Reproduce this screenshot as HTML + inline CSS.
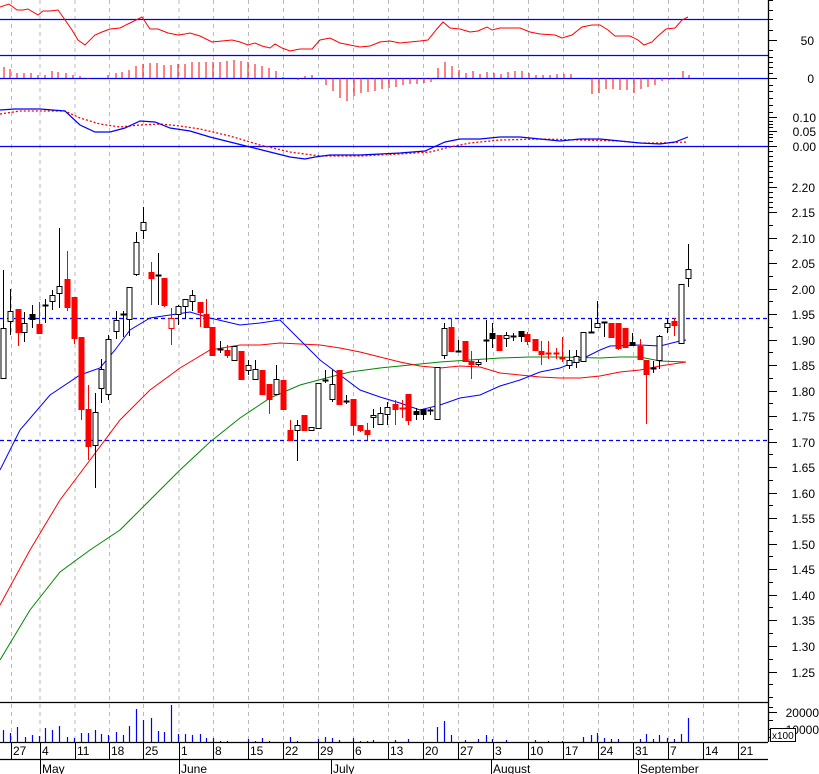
<!DOCTYPE html>
<html><head><meta charset="utf-8"><style>
html,body{margin:0;padding:0;background:#fff}
svg{display:block}
text{font-family:"Liberation Sans",sans-serif;font-size:12px;fill:#000}
.w{fill:#fff;stroke:#000;stroke-width:1}
.r{fill:#f00;stroke:#f00;stroke-width:1}
.rw{fill:#fff;stroke:#f00;stroke-width:1}
.k{fill:#000;stroke:#000;stroke-width:1}
.g{stroke:#bbb;stroke-dasharray:4,4;stroke-width:1}
</style></head><body>
<svg width="819" height="774" viewBox="0 0 819 774" xmlns="http://www.w3.org/2000/svg">
<rect width="819" height="774" fill="#fff"/>
<g id="grid"></g>
<g class="g">
<line x1="11.5" y1="0" x2="11.5" y2="742"/><line x1="40" y1="0" x2="40" y2="742"/><line x1="75" y1="0" x2="75" y2="742"/><line x1="109.5" y1="0" x2="109.5" y2="742"/><line x1="143.5" y1="0" x2="143.5" y2="742"/><line x1="179" y1="0" x2="179" y2="742"/><line x1="213.5" y1="0" x2="213.5" y2="742"/><line x1="248.5" y1="0" x2="248.5" y2="742"/><line x1="283.5" y1="0" x2="283.5" y2="742"/><line x1="318.5" y1="0" x2="318.5" y2="742"/><line x1="353.5" y1="0" x2="353.5" y2="742"/><line x1="388.5" y1="0" x2="388.5" y2="742"/><line x1="423.5" y1="0" x2="423.5" y2="742"/><line x1="458.5" y1="0" x2="458.5" y2="742"/><line x1="493.5" y1="0" x2="493.5" y2="742"/><line x1="528.5" y1="0" x2="528.5" y2="742"/><line x1="563.5" y1="0" x2="563.5" y2="742"/><line x1="598.5" y1="0" x2="598.5" y2="742"/><line x1="633.5" y1="0" x2="633.5" y2="742"/><line x1="668.5" y1="0" x2="668.5" y2="742"/><line x1="703.5" y1="0" x2="703.5" y2="742"/><line x1="738.5" y1="0" x2="738.5" y2="742"/>
</g>
<!-- panel lines -->
<g stroke="#00f" stroke-width="1.3">
<line x1="0" y1="19.5" x2="768" y2="19.5"/><line x1="0" y1="55.5" x2="768" y2="55.5"/><line x1="0" y1="78.5" x2="768" y2="78.5"/><line x1="0" y1="146.5" x2="768" y2="146.5"/>
</g>
<g stroke="#000" stroke-width="1.3">
<line x1="0" y1="702.5" x2="768" y2="702.5"/><line x1="0" y1="742.5" x2="768" y2="742.5"/><line x1="0" y1="759.5" x2="768" y2="759.5"/>
<line x1="768.5" y1="0" x2="768.5" y2="742"/>
</g>
<!-- RSI -->
<polyline fill="none" stroke="#f00" stroke-width="1" points="0,7 9,4 17,10 23,10 28,9 38,15 43,11 50,11 58,10 63,17 72,30 78,40 85,45 95,35 102,32 110,29 120,28 128,24 136,20 142,17 150,29 158,29 168,33 178,35 185,34 190,33 200,36 212,42 222,41 232,40 240,42 248,45 255,43 262,46 270,48 275,44 282,48 290,51 300,49 312,49 320,40 330,38 340,43 350,45 360,47 370,46 380,42 390,41 400,43 410,42 420,41 428,40 436,30 443,22 450,28 460,29 470,32 478,31 487,27 492,30 500,28 520,28 530,32 540,34 555,35 562,38 572,35 582,27 592,25 600,25 608,30 615,36 630,36 638,40 644,45 652,42 658,36 666,29 675,28 682,20 688,17"/>
<!-- histogram -->
<g stroke="#f00" stroke-width="1">
<path d="M4 78V67M10 78V69M17 78V73M24 78V73M31 78V73M38 78V75M45 78V75M52 78V71M58 78V72M66 78V73M73 78V75M80 78V76M88 78V79M108 78V75M116 78V73M122 78V72M129 78V70M136 78V66M143 78V64M150 78V63M157 78V63M164 78V65M171 78V65M178 78V64M185 78V64M192 78V62M199 78V62M206 78V62M213 78V62M220 78V62M227 78V61M234 78V60M241 78V61M248 78V62M255 78V64M262 78V66M269 78V68M276 78V71M283 78V77M298 78V80M305 78V76M312 78V75M326 78V85M333 78V91M340 78V98M347 78V101M354 78V96M361 78V93M368 78V92M375 78V91M382 78V89M389 78V88M396 78V87M403 78V85M410 78V84M417 78V84M424 78V83M431 78V82M438 78V68M445 78V62M452 78V66M459 78V70M466 78V73M473 78V71M480 78V74M487 78V72M494 78V73M501 78V74M508 78V72M515 78V71M522 78V71M529 78V73M536 78V75M543 78V75M550 78V75M557 78V74M564 78V74M571 78V74M592 78V94M599 78V93M606 78V89M613 78V89M620 78V90M627 78V90M634 78V93M641 78V89M648 78V87M655 78V85M662 78V81M669 78V80M676 78V79M683 78V71M689 78V75"/>
</g>
<!-- MACD -->
<polyline fill="none" stroke="#f00" stroke-width="1.3" stroke-dasharray="2,2" points="0,114 20,111 65,111 80,118 100,124 120,127 140,125 160,124 180,126 200,129 230,136 260,145 290,152 320,156 360,156 400,154 430,152 450,147 470,143 500,140 540,139 580,140 620,141 640,143 660,143 688,142"/>
<polyline fill="none" stroke="#00f" stroke-width="1.2" points="0,110 15,109 40,109 65,111 80,125 95,132 110,132 125,128 140,121 155,122 170,128 190,131 210,137 230,142 250,147 270,152 290,157 305,159 315,157 330,155 360,155 380,154 400,153 425,151 445,142 460,139 480,139 490,138 500,137 520,137 540,139 560,141 580,139 600,139 620,141 640,143 660,144 675,142 688,137"/>
<!-- price dashed lines -->
<g stroke="#00f" stroke-width="1.3" stroke-dasharray="4,3">
<line x1="0" y1="318.5" x2="768" y2="318.5"/><line x1="0" y1="440.5" x2="768" y2="440.5"/>
</g>
<!-- MAs -->
<polyline fill="none" stroke="#080" stroke-width="1" points="0,660 30,610 60,572 90,550 120,530 150,500 180,470 210,442 240,418 270,398 300,385 330,377 350,372 380,368 410,365 440,362 470,360 500,358 530,357 560,357 600,358 620,357 640,357 660,361 686,362"/>
<polyline fill="none" stroke="#f00" stroke-width="1" points="0,605 30,550 60,500 90,460 120,420 150,390 180,368 210,350 240,345 260,345 280,343 300,344 320,345 340,348 360,352 380,357 400,362 420,366 440,368 460,366 480,367 500,373 520,375 540,377 560,378 580,378 600,376 620,372 640,370 660,366 686,362"/>
<polyline fill="none" stroke="#00f" stroke-width="1" points="0,470 20,430 50,395 80,375 100,368 115,350 130,330 150,318 170,315 190,312 210,318 240,325 260,323 280,320 300,340 320,360 340,375 360,390 380,397 400,403 420,410 440,405 460,398 480,395 500,386 520,380 540,372 560,368 580,360 600,350 610,346 640,345 660,346 680,341 686,340"/>
<!-- candles -->
<g id="c"></g>
<g stroke-width="1">
<path stroke="#000" d="M3.5 270V379M10.5 289V335M24.5 312V342M32.5 305V328M45.5 299V323M52.5 290V310M59.5 228V308M95.5 393V488M101.5 359V403M108.5 335V400M116.5 311V339M123.5 311V337M129.5 287V336M136.5 232V276M143.5 207V239M158.5 253V305M178.5 305V325M185.5 299V319M192.5 290V311M220.5 341V353M234.5 346V360M248.5 360V375M255.5 360V379M276.5 365V394M297.5 420V461M311.5 427V430M318.5 383V428M325.5 370V383M332.5 370V402M346.5 395V404M373.5 409V428M380.5 407V424M387.5 402V425M416.5 408V420M423.5 409V420M430.5 408V415M437.5 367V419M444.5 323V359M458.5 340V352M478.5 360V366M486.5 320V362M492.5 323V348M506.5 332V347M513.5 333V341M521.5 331V342M569.5 350V369M576.5 350V368M583.5 332V361M591.5 318V332M597.5 301V328M604.5 322V337M632.5 333V345M653.5 361V373M659.5 335V369M667.5 318V333M681.5 284V343M688.5 244V287"/>
<path stroke="#f00" d="M18.5 309V346M39.5 302V333M67.5 251V311M74.5 297V344M81.5 337V420M88.5 385V460M151.5 262V305M164.5 278V307M171.5 308V345M200.5 302V327M206.5 299V327M212.5 327V355M227.5 345V358M241.5 351V380M262.5 370V394M269.5 384V414M283.5 380V409M290.5 420V440M304.5 415V430M339.5 370V404M353.5 399V435M360.5 425V432M367.5 423V440M395.5 400V425M402.5 400V418M408.5 394V425M451.5 318V352M465.5 341V362M471.5 351V379M499.5 335V350M527.5 332V345M535.5 339V350M541.5 341V365M548.5 341V359M556.5 348V359M562.5 337V362M611.5 323V337M618.5 323V350M625.5 328V347M640.5 339V359M646.5 360V424M674.5 318V336"/>
</g>
<g>
<rect class="w" x="1" y="328.5" width="5" height="50"/>
<rect class="w" x="8" y="311.5" width="5" height="10"/>
<rect class="r" x="16" y="309.5" width="5" height="23"/>
<rect class="w" x="22" y="323.5" width="5" height="9"/>
<rect class="k" x="30" y="314.5" width="5" height="5"/>
<rect class="r" x="37" y="324.5" width="5" height="9"/>
<rect class="k" x="43" y="305" width="5" height="1"/>
<rect class="w" x="50" y="295.5" width="5" height="6"/>
<rect class="w" x="57" y="286.5" width="5" height="7"/>
<rect class="r" x="65" y="279.5" width="5" height="28"/>
<rect class="r" x="72" y="297.5" width="5" height="41"/>
<rect class="r" x="79" y="337.5" width="5" height="72"/>
<rect class="r" x="86" y="409.5" width="5" height="37"/>
<rect class="w" x="93" y="412.5" width="5" height="33"/>
<rect class="w" x="99" y="369.5" width="5" height="19"/>
<rect class="w" x="106" y="339.5" width="5" height="55"/>
<rect class="w" x="114" y="320.5" width="5" height="11"/>
<rect class="k" x="121" y="314" width="5" height="1"/>
<rect class="w" x="127" y="287.5" width="5" height="32"/>
<rect class="w" x="134" y="242.5" width="5" height="32"/>
<rect class="w" x="141" y="222.5" width="5" height="8"/>
<rect class="r" x="149" y="272.5" width="5" height="6"/>
<rect class="k" x="156" y="275" width="5" height="1"/>
<rect class="r" x="162" y="278.5" width="5" height="27"/>
<rect class="rw" x="169" y="318.5" width="5" height="10"/>
<rect class="w" x="176" y="306.5" width="5" height="8"/>
<rect class="w" x="183" y="299.5" width="5" height="7"/>
<rect class="w" x="190" y="295.5" width="5" height="6"/>
<rect class="r" x="198" y="302.5" width="5" height="10"/>
<rect class="r" x="204" y="314.5" width="5" height="13"/>
<rect class="r" x="210" y="327.5" width="5" height="28"/>
<rect class="k" x="218" y="349" width="5" height="1"/>
<rect class="r" x="225" y="350.5" width="5" height="5"/>
<rect class="w" x="232" y="346.5" width="5" height="14"/>
<rect class="r" x="239" y="351.5" width="5" height="28"/>
<rect class="w" x="246" y="365.5" width="5" height="5"/>
<rect class="w" x="253" y="369.5" width="5" height="10"/>
<rect class="r" x="260" y="370.5" width="5" height="24"/>
<rect class="r" x="267" y="384.5" width="5" height="15"/>
<rect class="w" x="274" y="379.5" width="5" height="15"/>
<rect class="r" x="281" y="380.5" width="5" height="29"/>
<rect class="r" x="288" y="430.5" width="5" height="10"/>
<rect class="w" x="295" y="425.5" width="5" height="5"/>
<rect class="r" x="302" y="415.5" width="5" height="15"/>
<rect class="w" x="309" y="427.5" width="5" height="3"/>
<rect class="w" x="316" y="383.5" width="5" height="45"/>
<rect class="k" x="323" y="380" width="5" height="1"/>
<rect class="w" x="330" y="384.5" width="5" height="15"/>
<rect class="r" x="337" y="370.5" width="5" height="34"/>
<rect class="k" x="344" y="401" width="5" height="1"/>
<rect class="r" x="351" y="399.5" width="5" height="26"/>
<rect class="r" x="358" y="425.5" width="5" height="5"/>
<rect class="r" x="365" y="430.5" width="5" height="4"/>
<rect class="w" x="371" y="415.5" width="5" height="2"/>
<rect class="w" x="378" y="413.5" width="5" height="11"/>
<rect class="w" x="385" y="407.5" width="5" height="7"/>
<rect class="r" x="393" y="404.5" width="5" height="5"/>
<rect class="r" x="400" y="408" width="5" height="1"/>
<rect class="r" x="406" y="394.5" width="5" height="26"/>
<rect class="k" x="414" y="411.5" width="5" height="3"/>
<rect class="k" x="421" y="409.5" width="5" height="5"/>
<rect class="k" x="428" y="410" width="5" height="1"/>
<rect class="w" x="435" y="367.5" width="5" height="52"/>
<rect class="w" x="442" y="328.5" width="5" height="27"/>
<rect class="r" x="449" y="327.5" width="5" height="24"/>
<rect class="k" x="456" y="351" width="5" height="1"/>
<rect class="r" x="463" y="341.5" width="5" height="20"/>
<rect class="r" x="469" y="361.5" width="5" height="3"/>
<rect class="w" x="476" y="362.5" width="5" height="2"/>
<rect class="k" x="484" y="340" width="5" height="1"/>
<rect class="k" x="490" y="333.5" width="5" height="5"/>
<rect class="r" x="497" y="335.5" width="5" height="15"/>
<rect class="w" x="504" y="335.5" width="5" height="3"/>
<rect class="k" x="511" y="336" width="5" height="1"/>
<rect class="k" x="519" y="331.5" width="5" height="5"/>
<rect class="r" x="525" y="334.5" width="5" height="7"/>
<rect class="r" x="533" y="339.5" width="5" height="11"/>
<rect class="r" x="539" y="351.5" width="5" height="3"/>
<rect class="r" x="546" y="353" width="5" height="1"/>
<rect class="r" x="554" y="353" width="5" height="1"/>
<rect class="r" x="560" y="358" width="5" height="1"/>
<rect class="w" x="567" y="360.5" width="5" height="5"/>
<rect class="w" x="574" y="356.5" width="5" height="6"/>
<rect class="w" x="581" y="332.5" width="5" height="29"/>
<rect class="k" x="589" y="332" width="5" height="1"/>
<rect class="w" x="595" y="323.5" width="5" height="4"/>
<rect class="k" x="602" y="322" width="5" height="1"/>
<rect class="r" x="609" y="323.5" width="5" height="14"/>
<rect class="r" x="616" y="323.5" width="5" height="25"/>
<rect class="r" x="623" y="328.5" width="5" height="19"/>
<rect class="k" x="630" y="342.5" width="5" height="3"/>
<rect class="r" x="638" y="346.5" width="5" height="13"/>
<rect class="r" x="644" y="360.5" width="5" height="14"/>
<rect class="k" x="651" y="368" width="5" height="1"/>
<rect class="w" x="657" y="336.5" width="5" height="24"/>
<rect class="w" x="665" y="323.5" width="5" height="4"/>
<rect class="r" x="672" y="321.5" width="5" height="4"/>
<rect class="w" x="679" y="284.5" width="5" height="59"/>
<rect class="w" x="686" y="269.5" width="5" height="9"/>
</g>
<!-- volume -->
<path stroke="#00f" stroke-width="1.2" d="M3.5 742V730M10.5 742V733M17.5 742V727M25.5 742V737M32.5 742V735M39.5 742V736M45.5 742V728M52.5 742V730M59.5 742V726M67.5 742V737M74.5 742V738M81.5 742V733M88.5 742V733M95.5 742V730M101.5 742V734M108.5 742V735M116.5 742V732M123.5 742V735M129.5 742V726M136.5 742V709M143.5 742V720M151.5 742V718M158.5 742V731M164.5 742V732M171.5 742V705M178.5 742V734M185.5 742V734M192.5 742V735M200.5 742V734M206.5 742V738M213.5 742V738M220.5 742V741M227.5 742V741M248.5 742V739M255.5 742V741M262.5 742V738M269.5 742V741M290.5 742V737M297.5 742V741M318.5 742V739M325.5 742V737M332.5 742V738M339.5 742V740M353.5 742V738M360.5 742V741M367.5 742V741M373.5 742V740M395.5 742V740M408.5 742V739M437.5 742V727M444.5 742V721M451.5 742V735M465.5 742V740M478.5 742V739M486.5 742V735M492.5 742V739M506.5 742V740M535.5 742V740M548.5 742V741M562.5 742V741M583.5 742V737M591.5 742V735M597.5 742V733M604.5 742V738M611.5 742V739M618.5 742V739M640.5 742V739M646.5 742V734M653.5 742V739M659.5 742V735M667.5 742V738M674.5 742V739M681.5 742V734M688.5 742V718"/>
<!-- right axis ticks -->
<path stroke="#000" stroke-width="1" d="M769 0.5h4M769 10.5h4M769 19.5h4M769 30.5h4M769 40.5h8M769 50.5h4M769 57.5h4M769 62.5h4M769 67.5h4M769 73.5h4M769 78.5h8M769 85.5h4M769 91.5h4M769 98.5h4M769 105.5h4M769 112.5h4M769 117.5h8M769 121.5h4M769 124.5h4M769 127.5h4M769 131.5h8M769 134.5h4M769 137.5h4M769 141.5h4M769 146.5h8M769 151.5h4M769 156.5h4M769 161.5h4M769 166.5h4M769 171.5h4M769 177.5h4M769 182.5h4M769 187.5h8M769 192.5h4M769 197.5h4M769 202.5h4M769 207.5h4M769 212.5h8M769 238.5h8M769 263.5h8M769 289.5h8M769 314.5h8M769 340.5h8M769 365.5h8M769 391.5h8M769 416.5h8M769 442.5h8M769 467.5h8M769 493.5h8M769 518.5h8M769 544.5h8M769 569.5h8M769 595.5h8M769 620.5h8M769 646.5h8M769 672.5h8M769 697.5h4M769 707.5h4M769 712.5h8M769 720.5h4M769 729.5h8M769 737.5h4"/>
<path stroke="#000" stroke-width="1" d="M769 225.5h4M769 250.5h4M769 276.5h4M769 301.5h4M769 327.5h4M769 352.5h4M769 378.5h4M769 403.5h4M769 429.5h4M769 454.5h4M769 480.5h4M769 505.5h4M769 531.5h4M769 556.5h4M769 582.5h4M769 607.5h4M769 633.5h4M769 659.5h4M769 684.5h4"/>
<g text-anchor="end">
<text x="814" y="45">50</text><text x="814" y="83">0</text>
<text x="816" y="122">0.10</text><text x="816" y="136">0.05</text><text x="816" y="151">0.00</text>
<text x="815" y="192">2.20</text><text x="815" y="217">2.15</text><text x="815" y="243">2.10</text><text x="815" y="268">2.05</text><text x="815" y="294">2.00</text><text x="815" y="319">1.95</text><text x="815" y="345">1.90</text><text x="815" y="370">1.85</text><text x="815" y="396">1.80</text><text x="815" y="421">1.75</text><text x="815" y="447">1.70</text><text x="815" y="472">1.65</text><text x="815" y="498">1.60</text><text x="815" y="523">1.55</text><text x="815" y="549">1.50</text><text x="815" y="574">1.45</text><text x="815" y="600">1.40</text><text x="815" y="625">1.35</text><text x="815" y="651">1.30</text><text x="815" y="677">1.25</text>
<text x="819" y="717">20000</text><text x="819" y="734">10000</text>
</g>
<rect x="770.5" y="728.5" width="25" height="13" fill="#fff" stroke="#000"/>
<text x="772" y="739" style="font-size:10px">x100</text>
<!-- date axis -->
<path stroke="#000" stroke-width="1" d="M11.5 742V759M40.5 742V774M75.5 742V759M109.5 742V759M143.5 742V759M179.5 742V774M213.5 742V759M248.5 742V759M283.5 742V759M318.5 742V759M331.5 759V774M353.5 742V759M388.5 742V759M423.5 742V759M458.5 742V759M491.5 759V774M493.5 742V759M528.5 742V759M563.5 742V759M598.5 742V759M633.5 742V759M638.5 759V774M668.5 742V759M703.5 742V759M738.5 742V759"/>
<text x="13" y="755">27</text><text x="42" y="755">4</text><text x="77" y="755">11</text><text x="111" y="755">18</text><text x="145" y="755">25</text><text x="181" y="755">1</text><text x="215" y="755">8</text><text x="250" y="755">15</text><text x="285" y="755">22</text><text x="320" y="755">29</text><text x="355" y="755">6</text><text x="390" y="755">13</text><text x="425" y="755">20</text><text x="460" y="755">27</text><text x="495" y="755">3</text><text x="530" y="755">10</text><text x="565" y="755">17</text><text x="600" y="755">24</text><text x="635" y="755">31</text><text x="670" y="755">7</text><text x="705" y="755">14</text><text x="740" y="755">21</text>
<text x="42" y="773">May</text><text x="181" y="773">June</text><text x="333" y="773">July</text><text x="493" y="773">August</text><text x="640" y="773">September</text>
</svg>
</body></html>
